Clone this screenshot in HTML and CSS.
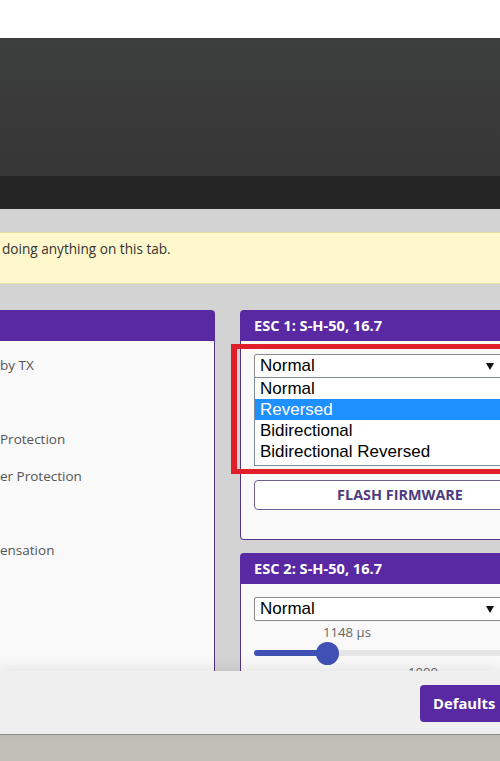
FILE: index.html
```html
<!DOCTYPE html>
<html>
<head>
<meta charset="utf-8">
<link rel="stylesheet" href="styles.css">
</head>
<body>
<div class="top"></div>
<div class="header"></div>
<div class="tabs"></div>
<div class="content">
  <div class="notice">doing anything on this tab.</div>
  <div class="columns">
    <div class="left">
      <div class="left-head"></div>
      <div class="left-body">
        <div class="row">by TX</div>
        <div class="row"></div>
        <div class="row">Protection</div>
        <div class="row">er Protection</div>
        <div class="row"></div>
        <div class="row">ensation</div>
        <div class="row"></div>
        <div class="row"></div>
        <div class="row"></div>
      </div>
    </div>
    <div class="right">
      <div class="esc-panel">
        <div class="esc-head">ESC 1: S-H-50, 16.7</div>
        <div class="esc-body">
          <div class="select open">
            <span>Normal</span>
            <svg class="arrow" width="8" height="7" viewBox="0 0 8 7"><polygon points="0,0 8,0 4,7" fill="#111"/></svg>
          </div>
          <div class="options">
            <div class="opt">Normal</div>
            <div class="opt sel">Reversed</div>
            <div class="opt">Bidirectional</div>
            <div class="opt">Bidirectional Reversed</div>
          </div>
          <div class="flash">FLASH FIRMWARE</div>
        </div>
        <div class="highlight-box"></div>
      </div>
      <div class="esc-panel">
        <div class="esc-head">ESC 2: S-H-50, 16.7</div>
        <div class="esc-body">
          <div class="select">
            <span>Normal</span>
            <svg class="arrow" width="8" height="7" viewBox="0 0 8 7"><polygon points="0,0 8,0 4,7" fill="#111"/></svg>
          </div>
          <div class="value">1148 µs</div>
          <div class="slider">
            <div class="track"></div>
            <div class="fill" style="width:74px"></div>
            <div class="thumb" style="left:62px"></div>
          </div>
          <div class="scale">1000</div>
        </div>
      </div>
    </div>
  </div>
</div>
<div class="footer">
  <div class="defaults">Defaults</div>
</div>
</body>
</html>
```
FILE: styles.css
```css
html, body {
  margin: 0;
  padding: 0;
}
body {
  width: 500px;
  height: 761px;
  overflow: hidden;
  background: #c1bfb8;
  font-family: "Open Sans", "Liberation Sans", sans-serif;
}
.top {
  height: 38px;
  background: #ffffff;
}
.header {
  height: 138px;
  background: linear-gradient(#3d3f3e, #353635);
}
.tabs {
  height: 33px;
  background: #252525;
}
.content {
  height: 462px;
  box-sizing: border-box;
  padding-top: 23px;
  background: #d3d3d3;
  overflow: hidden;
}
.notice {
  height: 52px;
  box-sizing: border-box;
  background: #fff8cd;
  border-top: 1px solid #e7dca5;
  border-bottom: 1px solid #e7dca5;
  padding: 7px 0 0 2px;
  font-size: 13.6px;
  line-height: 18px;
  color: #333;
}
.columns {
  display: flex;
  gap: 25px;
  margin-top: 26px;
}
.left {
  width: 215px;
  flex: none;
}
.left-head {
  height: 31px;
  background: #5829a3;
  border-top-right-radius: 4px;
}
.left-body {
  height: 400px;
  box-sizing: border-box;
  background: #f9f9f9;
  border-right: 1px solid #4e3585;
  padding-top: 6px;
}
.row {
  height: 37px;
  line-height: 37px;
  font-size: 13.5px;
  color: #555;
  white-space: nowrap;
}
.right {
  width: 320px;
  flex: none;
  display: flex;
  flex-direction: column;
  gap: 13px;
}
.esc-panel {
  position: relative;
}
.esc-head {
  height: 31px;
  box-sizing: border-box;
  background: #5829a3;
  border-radius: 4px 4px 0 0;
  color: #fff;
  font-weight: 700;
  font-size: 14.6px;
  line-height: 31px;
  padding-left: 14px;
}
.esc-body {
  background: #f9f9f9;
  border: 1px solid #4e3585;
  border-top: none;
  border-radius: 0 0 4px 4px;
  padding: 13px 13px 29px 13px;
}
.select {
  width: 250px;
  height: 24px;
  box-sizing: border-box;
  border: 1px solid #8a8a8a;
  border-radius: 2px;
  background: #fff;
  display: flex;
  align-items: center;
  justify-content: space-between;
  padding: 0 9px 0 5px;
  font-family: "Liberation Sans", Arial, sans-serif;
  font-size: 17px;
  color: #000;
}
.arrow {
  display: block;
}
.options {
  width: 250px;
  box-sizing: border-box;
  margin-top: -1px;
  border: 1px solid #7f8a96;
  background: #fff;
  padding: 0 0 3px 0;
  font-family: "Liberation Sans", Arial, sans-serif;
  font-size: 17px;
  color: #000;
}
.opt {
  height: 21px;
  line-height: 21px;
  padding-left: 5px;
}
.opt.sel {
  background: #1e90ff;
  color: #fff;
}
.flash {
  margin-top: 14px;
  height: 30px;
  box-sizing: border-box;
  border: 1px solid #6e5f90;
  border-radius: 4px;
  background: #fff;
  color: #4e3c7e;
  font-weight: 700;
  font-size: 14.4px;
  line-height: 28px;
  text-align: center;
}
.highlight-box {
  position: absolute;
  left: -9px;
  top: 34px;
  width: 320px;
  height: 130px;
  box-sizing: border-box;
  border: 5px solid #e11f2b;
  border-left-width: 6px;
}
.value {
  margin-left: 69px;
  height: 18px;
  line-height: 18px;
  margin-top: 2px;
  font-size: 13.2px;
  color: #666;
}
.slider {
  position: relative;
  height: 23px;
  margin-top: 1px;
}
.track {
  position: absolute;
  left: 0;
  right: 0;
  top: 8px;
  height: 6px;
  border-radius: 3px;
  background: #e6e6e6;
}
.fill {
  position: absolute;
  left: 0;
  top: 8px;
  height: 6px;
  border-radius: 3px;
  background: #3f51b5;
}
.thumb {
  position: absolute;
  top: 0;
  width: 23px;
  height: 23px;
  border-radius: 50%;
  background: #3f51b5;
}
.scale {
  margin-left: 154px;
  margin-top: -2px;
  font-size: 13.2px;
  line-height: 18px;
  color: #666;
}
.footer {
  position: relative;
  z-index: 2;
  height: 64px;
  box-sizing: border-box;
  background: #efefef;
  border-bottom: 1px solid #8b8b8b;
  box-shadow: 0 -4px 12px rgba(0, 0, 0, 0.08);
  padding: 14px 0 0 420px;
  display: flex;
}
.defaults {
  flex: none;
  width: 90px;
  height: 37px;
  box-sizing: border-box;
  background: #5829a3;
  border-radius: 4px;
  color: #fff;
  font-weight: 700;
  font-size: 14.8px;
  line-height: 37px;
  padding-left: 13px;
  white-space: nowrap;
}
```
